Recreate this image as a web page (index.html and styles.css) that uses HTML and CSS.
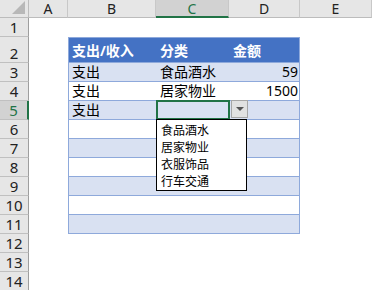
FILE: index.html
```html
<!DOCTYPE html>
<html lang="zh-CN">
<head>
  <meta charset="UTF-8">
  <title>支出表</title>
  <link rel="stylesheet" href="styles.css">
</head>
<body>
  <div class="sheet">
    <div class="corner"><span class="corner-tri"></span></div>
    <div class="colhead">A</div>
    <div class="colhead">B</div>
    <div class="colhead active">C</div>
    <div class="colhead">D</div>
    <div class="colhead">E</div>

    <div class="rowhead">1</div>
    <div class="blank"></div>

    <div class="rowhead">2</div>
    <div class="gap"></div>
    <div class="trow thead">
      <div class="cell">支出/收入</div>
      <div class="cell">分类</div>
      <div class="cell">金额</div>
    </div>
    <div class="gap"></div>

    <div class="rowhead">3</div>
    <div class="gap"></div>
    <div class="trow band">
      <div class="cell">支出</div>
      <div class="cell">食品酒水</div>
      <div class="cell num">59</div>
    </div>
    <div class="gap"></div>

    <div class="rowhead">4</div>
    <div class="gap"></div>
    <div class="trow">
      <div class="cell">支出</div>
      <div class="cell">居家物业</div>
      <div class="cell num">1500</div>
    </div>
    <div class="gap"></div>

    <div class="rowhead active">5</div>
    <div class="gap"></div>
    <div class="trow band">
      <div class="cell">支出</div>
      <div class="cell current">
        <div class="selection"></div>
        <div class="drop-btn"><span class="drop-tri"></span></div>
        <ul class="drop-list">
          <li>食品酒水</li>
          <li>居家物业</li>
          <li>衣服饰品</li>
          <li>行车交通</li>
        </ul>
      </div>
      <div class="cell num"></div>
    </div>
    <div class="gap"></div>

    <div class="rowhead">6</div>
    <div class="gap"></div>
    <div class="trow"><div class="cell"></div><div class="cell"></div><div class="cell"></div></div>
    <div class="gap"></div>

    <div class="rowhead">7</div>
    <div class="gap"></div>
    <div class="trow band"><div class="cell"></div><div class="cell"></div><div class="cell"></div></div>
    <div class="gap"></div>

    <div class="rowhead">8</div>
    <div class="gap"></div>
    <div class="trow"><div class="cell"></div><div class="cell"></div><div class="cell"></div></div>
    <div class="gap"></div>

    <div class="rowhead">9</div>
    <div class="gap"></div>
    <div class="trow band"><div class="cell"></div><div class="cell"></div><div class="cell"></div></div>
    <div class="gap"></div>

    <div class="rowhead">10</div>
    <div class="gap"></div>
    <div class="trow"><div class="cell"></div><div class="cell"></div><div class="cell"></div></div>
    <div class="gap"></div>

    <div class="rowhead">11</div>
    <div class="gap"></div>
    <div class="trow band"><div class="cell"></div><div class="cell"></div><div class="cell"></div></div>
    <div class="gap"></div>

    <div class="rowhead">12</div>
    <div class="blank"></div>
    <div class="rowhead">13</div>
    <div class="blank"></div>
    <div class="rowhead">14</div>
    <div class="blank"></div>
  </div>
</body>
</html>
```

FILE: styles.css
```css
* {
  box-sizing: border-box;
}
body {
  margin: 0;
  background: #fff;
  font-family: "Noto Sans", "Noto Sans CJK SC", sans-serif;
  color: #000;
  overflow: hidden;
}
.sheet {
  display: grid;
  grid-template-columns: 29px 39px 88px 73px 71px 72px;
  grid-template-rows: 18px 19px 26px repeat(12, 19px);
  width: 372px;
}
.corner {
  position: relative;
  background: #e6e6e6;
  border-right: 1px solid #bcbcbc;
  border-bottom: 1px solid #bcbcbc;
}
.corner-tri {
  position: absolute;
  right: 3px;
  bottom: 3px;
  width: 0;
  height: 0;
  border-left: 13px solid transparent;
  border-bottom: 13px solid #b8b8b8;
}
.colhead {
  background: #e6e6e6;
  border-right: 1px solid #c8c8c8;
  border-bottom: 1px solid #bcbcbc;
  font-size: 14px;
  line-height: 17px;
  text-align: center;
  color: #222;
}
.colhead.active {
  background: #d2d2d2;
  color: #217346;
  border-bottom: 2px solid #217346;
}
.rowhead {
  background: #e6e6e6;
  border-right: 1px solid #9e9e9e;
  border-bottom: 1px solid #c0c0c0;
  font-size: 15px;
  text-align: center;
  display: flex;
  align-items: flex-end;
  justify-content: center;
  line-height: 18px;
  color: #222;
}
.rowhead.active {
  background: #d2d2d2;
  color: #217346;
  border-right: 2px solid #217346;
}
.blank {
  grid-column: 2 / span 5;
}
.trow {
  grid-column: 3 / span 3;
  display: grid;
  grid-template-columns: 88px 73px 71px;
  border-left: 1px solid #8ea9db;
  border-right: 1px solid #8ea9db;
  border-bottom: 1px solid #8ea9db;
}
.trow.band {
  background: #d9e1f2;
}
.trow.thead {
  background: #4472c4;
  color: #fff;
  font-weight: bold;
  border-top: 1px solid #8ea9db;
}
.cell {
  font-size: 14px;
  line-height: 18px;
  padding: 0 3px;
  white-space: nowrap;
  display: flex;
  align-items: flex-end;
}
.thead .cell {
  align-items: center;
  padding-top: 1px;
}
.cell.num {
  justify-content: flex-end;
}
.cell.current {
  position: relative;
}
.selection {
  position: absolute;
  left: -1px;
  top: -1px;
  width: 74px;
  height: 20px;
  border: 2px solid #217346;
}
.drop-btn {
  position: absolute;
  left: 74px;
  top: -1px;
  width: 17px;
  height: 18px;
  background: #e1e1e1;
  border: 1px solid #a6a6a6;
  display: flex;
  align-items: center;
  justify-content: center;
}
.drop-tri {
  width: 0;
  height: 0;
  border-left: 4px solid transparent;
  border-right: 4px solid transparent;
  border-top: 4px solid #555;
}
.drop-list {
  position: absolute;
  left: -1px;
  top: 18px;
  width: 91px;
  margin: 0;
  padding: 2px 0 0 4px;
  list-style: none;
  background: #fff;
  border: 1px solid #000;
  z-index: 2;
}
.drop-list li {
  font-size: 12px;
  line-height: 17px;
  height: 17px;
}
```
